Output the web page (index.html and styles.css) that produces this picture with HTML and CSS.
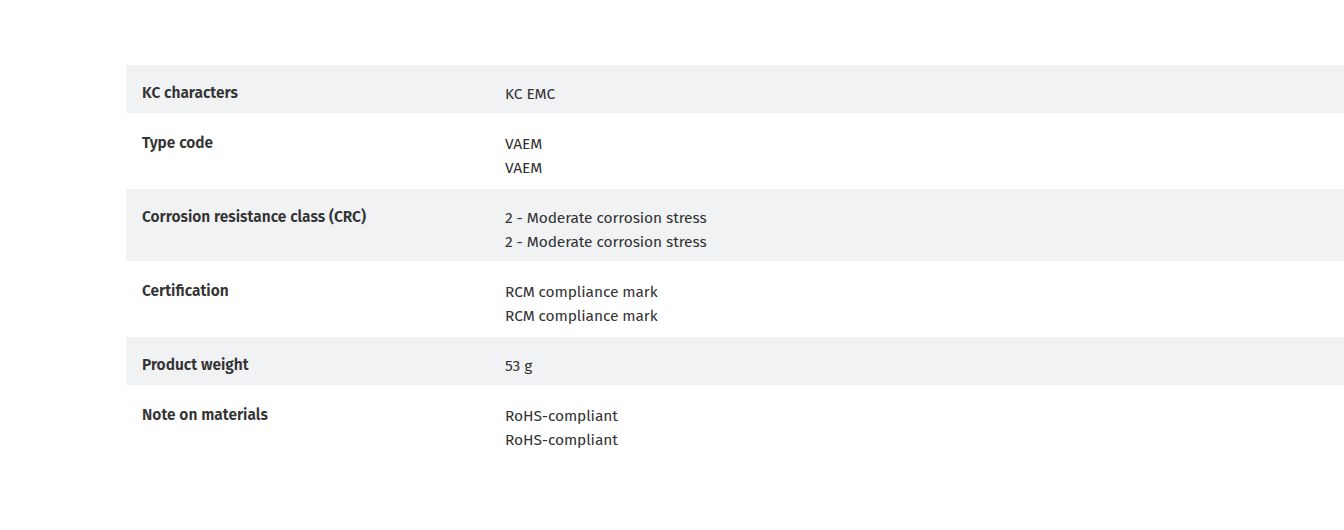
FILE: index.html
```html
<!DOCTYPE html>
<html lang="en">
<head>
    <meta charset="UTF-8">
    <meta name="viewport" content="width=device-width, initial-scale=1.0">
    <title>Technical data</title>
    <link rel="stylesheet" href="styles.css">
</head>
<body>
    <div class="specs">
        <div class="row shaded">
            <div class="label">KC characters</div>
            <div class="value">KC EMC</div>
        </div>
        <div class="row">
            <div class="label">Type code</div>
            <div class="value">VAEM<br>VAEM</div>
        </div>
        <div class="row shaded">
            <div class="label">Corrosion resistance class (CRC)</div>
            <div class="value">2 - Moderate corrosion stress<br>2 - Moderate corrosion stress</div>
        </div>
        <div class="row">
            <div class="label">Certification</div>
            <div class="value">RCM compliance mark<br>RCM compliance mark</div>
        </div>
        <div class="row shaded">
            <div class="label">Product weight</div>
            <div class="value">53 g</div>
        </div>
        <div class="row">
            <div class="label">Note on materials</div>
            <div class="value">RoHS-compliant<br>RoHS-compliant</div>
        </div>
    </div>
</body>
</html>
```
FILE: styles.css
```css
body {
    margin: 0;
    background-color: #fff;
    font-family: "Fira Sans", Lato, sans-serif;
    font-size: 15.5px;
    line-height: 24px;
    color: #333;
}
.specs {
    padding: 65px 0 0 126px;
}
.row {
    display: grid;
    grid-template-columns: 379px 1fr;
    padding: 19px 0 9px;
}
.row.shaded {
    background-color: #f1f2f4;
    padding: 17px 0 7px;
}
.label {
    padding-left: 16px;
    font-weight: 600;
    margin-top: -1px;
}
.value {
    letter-spacing: -0.1px;
}
```
